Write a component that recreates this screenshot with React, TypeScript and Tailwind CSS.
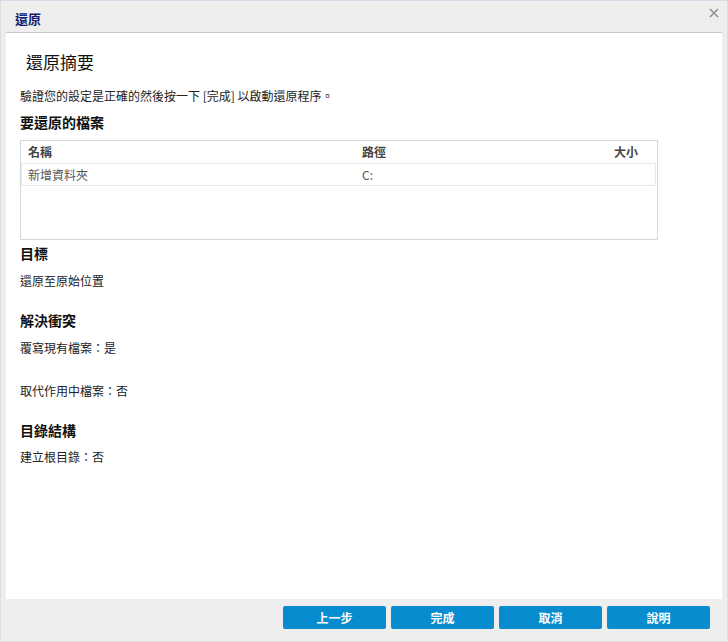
import React from "react";

const font = { fontFamily: '"Noto Sans CJK TC", "Liberation Sans", sans-serif' };

export default function App() {
  return (
    <div
      className="w-[728px] h-[642px] bg-[#eeeeee] border border-[#dddddd] border-t-[#d9d9ea] flex flex-col box-border"
      style={font}
    >
      {/* title bar */}
      <div className="h-[31px] flex items-center justify-between pl-[14px] pr-[8px] shrink-0">
        <span className="text-[13px] leading-[16px] font-bold text-[#14206e] mt-[4px]">還原</span>
        <svg width="10" height="10" viewBox="0 0 10 10" className="self-start mt-[7px]">
          <path d="M1 1 L9 9 M9 1 L1 9" stroke="#8a8a8a" strokeWidth="1.4" fill="none" />
        </svg>
      </div>

      {/* content */}
      <div className="mx-[5px] h-[567px] bg-white border-t border-[#c9c9c9] flex flex-col pl-[14px] pt-[19px] text-[#222]">
        <div className="ml-[6px] text-[17px] leading-[20px] text-[#111]">還原摘要</div>
        <div className="mt-[16px] text-[12px] leading-[16px]">
          驗證您的設定是正確的然後按一下 [完成] 以啟動還原程序。
        </div>
        <div className="mt-[9px] text-[14px] leading-[18px] font-bold text-[#111]">要還原的檔案</div>

        {/* table */}
        <div className="mt-[9px] w-[638px] h-[100px] border border-[#cfd8df] flex flex-col">
          <div className="h-[22px] flex items-center text-[12px] font-bold text-[#444] pl-[7px]">
            <span className="w-[334px]">名稱</span>
            <span className="w-[252px]">路徑</span>
            <span>大小</span>
          </div>
          <div className="h-[23px] mr-[1px] border border-[#e6e8ea] flex items-center text-[12px] text-[#555] pl-[6px]">
            <span className="w-[334px]">新增資料夾</span>
            <span>C:</span>
          </div>
        </div>

        <div className="mt-[4px] text-[14px] leading-[18px] font-bold text-[#111]">目標</div>
        <div className="mt-[11px] text-[12px] leading-[16px]">還原至原始位置</div>

        <div className="mt-[22px] text-[14px] leading-[18px] font-bold text-[#111]">解決衝突</div>
        <div className="mt-[11px] text-[12px] leading-[16px]">覆寫現有檔案：是</div>
        <div className="mt-[27px] text-[12px] leading-[16px]">取代作用中檔案：否</div>

        <div className="mt-[22px] text-[14px] leading-[18px] font-bold text-[#111]">目錄結構</div>
        <div className="mt-[10px] text-[12px] leading-[16px]">建立根目錄：否</div>
      </div>

      {/* footer */}
      <div className="flex justify-end gap-[5px] pt-[7px] pr-[17px]">
        {["上一步", "完成", "取消", "說明"].map((t) => (
          <button
            key={t}
            className="w-[103px] h-[23px] rounded-[2px] bg-[#078dcf] text-white text-[12px] font-bold leading-[23px]"
          >
            {t}
          </button>
        ))}
      </div>
    </div>
  );
}
